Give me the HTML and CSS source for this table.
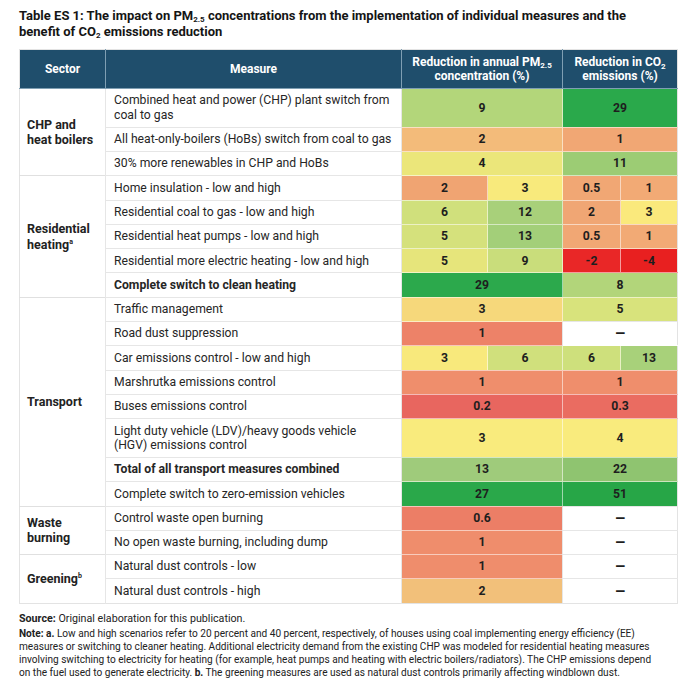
FILE: index.html
```html
<!DOCTYPE html>
<html>
<head>
<meta charset="utf-8">
<link rel="stylesheet" href="styles.css">
</head>
<body>
<div class="page">
  <h1 class="title">Table ES 1: The impact on PM<sub class="sub25">2.5</sub> concentrations from the implementation of individual measures and the benefit of CO<sub class="sub2">2</sub> emissions reduction</h1>
  <table class="tbl">
    <colgroup>
      <col class="c-sector"><col class="c-measure"><col class="c-pm1"><col class="c-pm2"><col class="c-co1"><col class="c-co2">
    </colgroup>
    <thead>
      <tr>
        <th>Sector</th>
        <th>Measure</th>
        <th colspan="2">Reduction in annual PM<sub class="hsub">2.5</sub><br>concentration (%)</th>
        <th colspan="2">Reduction in CO<sub class="hsub2">2</sub><br>emissions (%)</th>
      </tr>
    </thead>
    <tbody>
      <tr class="grp">
        <td class="sector" rowspan="3">CHP and<br>heat boilers</td>
        <td class="measure">Combined heat and power (CHP) plant switch from coal to gas</td>
        <td class="v" colspan="2" style="background:#b3d67a">9</td>
        <td class="v" colspan="2" style="background:#2aa94b">29</td>
      </tr>
      <tr>
        <td class="measure">All heat-only-boilers (HoBs) switch from coal to gas</td>
        <td class="v" colspan="2" style="background:#f3bb7a">2</td>
        <td class="v" colspan="2" style="background:#f1a774">1</td>
      </tr>
      <tr>
        <td class="measure">30% more renewables in CHP and HoBs</td>
        <td class="v" colspan="2" style="background:#ebe67a">4</td>
        <td class="v" colspan="2" style="background:#9ccc74">11</td>
      </tr>
      <tr class="grp">
        <td class="sector" rowspan="5">Residential<br>heating<sup>a</sup></td>
        <td class="measure">Home insulation - low and high</td>
        <td class="v" style="background:#f0a472">2</td>
        <td class="v" style="background:#f8ea7c">3</td>
        <td class="v" style="background:#f1a774">0.5</td>
        <td class="v" style="background:#f2aa75">1</td>
      </tr>
      <tr>
        <td class="measure">Residential coal to gas - low and high</td>
        <td class="v" style="background:#d0e07c">6</td>
        <td class="v" style="background:#a8d07a">12</td>
        <td class="v" style="background:#f0a674">2</td>
        <td class="v" style="background:#fae97c">3</td>
      </tr>
      <tr>
        <td class="measure">Residential heat pumps - low and high</td>
        <td class="v" style="background:#d5e17c">5</td>
        <td class="v" style="background:#a3cf79">13</td>
        <td class="v" style="background:#f1a774">0.5</td>
        <td class="v" style="background:#f2aa75">1</td>
      </tr>
      <tr>
        <td class="measure">Residential more electric heating - low and high</td>
        <td class="v" style="background:#e6e57b">5</td>
        <td class="v" style="background:#c9dd7b">9</td>
        <td class="v" style="background:#e92727">-2</td>
        <td class="v" style="background:#e82020">-4</td>
      </tr>
      <tr>
        <td class="measure bold">Complete switch to clean heating</td>
        <td class="v" colspan="2" style="background:#2ca94c">29</td>
        <td class="v" colspan="2" style="background:#b2d57a">8</td>
      </tr>
      <tr class="grp">
        <td class="sector" rowspan="8">Transport</td>
        <td class="measure">Traffic management</td>
        <td class="v" colspan="2" style="background:#f6d87b">3</td>
        <td class="v" colspan="2" style="background:#d8e37c">5</td>
      </tr>
      <tr>
        <td class="measure">Road dust suppression</td>
        <td class="v" colspan="2" style="background:#ed8268">1</td>
        <td class="v dash" colspan="2">–</td>
      </tr>
      <tr>
        <td class="measure">Car emissions control - low and high</td>
        <td class="v" style="background:#f8e97c">3</td>
        <td class="v" style="background:#d0e07c">6</td>
        <td class="v" style="background:#cee07c">6</td>
        <td class="v" style="background:#a8d17a">13</td>
      </tr>
      <tr>
        <td class="measure">Marshrutka emissions control</td>
        <td class="v" colspan="2" style="background:#ef8e6c">1</td>
        <td class="v" colspan="2" style="background:#ef8e6c">1</td>
      </tr>
      <tr>
        <td class="measure">Buses emissions control</td>
        <td class="v" colspan="2" style="background:#e8665f">0.2</td>
        <td class="v" colspan="2" style="background:#ea6c61">0.3</td>
      </tr>
      <tr>
        <td class="measure">Light duty vehicle (LDV)/heavy goods vehicle<br>(HGV) emissions control</td>
        <td class="v" colspan="2" style="background:#f9eb7d">3</td>
        <td class="v" colspan="2" style="background:#f9eb7d">4</td>
      </tr>
      <tr>
        <td class="measure bold">Total of all transport measures combined</td>
        <td class="v" colspan="2" style="background:#9fcb7b">13</td>
        <td class="v" colspan="2" style="background:#8fc470">22</td>
      </tr>
      <tr>
        <td class="measure">Complete switch to zero-emission vehicles</td>
        <td class="v" colspan="2" style="background:#2aa84a">27</td>
        <td class="v" colspan="2" style="background:#27a647">51</td>
      </tr>
      <tr class="grp">
        <td class="sector" rowspan="2">Waste<br>burning</td>
        <td class="measure">Control waste open burning</td>
        <td class="v" colspan="2" style="background:#ec7e66">0.6</td>
        <td class="v dash" colspan="2">–</td>
      </tr>
      <tr>
        <td class="measure">No open waste burning, including dump</td>
        <td class="v" colspan="2" style="background:#ef8d6c">1</td>
        <td class="v dash" colspan="2">–</td>
      </tr>
      <tr class="grp">
        <td class="sector" rowspan="2">Greening<sup>b</sup></td>
        <td class="measure">Natural dust controls - low</td>
        <td class="v" colspan="2" style="background:#ef8d6c">1</td>
        <td class="v dash" colspan="2">–</td>
      </tr>
      <tr>
        <td class="measure">Natural dust controls - high</td>
        <td class="v" colspan="2" style="background:#f2c07a">2</td>
        <td class="v dash" colspan="2">–</td>
      </tr>
    </tbody>
  </table>
  <p class="source"><b>Source:</b> Original elaboration for this publication.</p>
  <p class="note"><b>Note: a.</b> Low and high scenarios refer to 20 percent and 40 percent, respectively, of houses using coal implementing energy efficiency (EE)<br>measures or switching to cleaner heating. Additional electricity demand from the existing CHP was modeled for residential heating measures<br>involving switching to electricity for heating (for example, heat pumps and heating with electric boilers/radiators). The CHP emissions depend<br>on the fuel used to generate electricity. <b>b.</b> The greening measures are used as natural dust controls primarily affecting windblown dust.</p>
</div>
</body>
</html>
```

FILE: styles.css
```css
html, body {
  margin: 0;
  padding: 0;
  background: #ffffff;
}
.page {
  padding: 8px 19px 0 19px;
  font-family: Roboto, "Liberation Sans", sans-serif;
  color: #222222;
}
.title {
  margin: 0 0 9px 0;
  font-size: 13px;
  line-height: 16px;
  font-weight: 700;
  color: #151515;
  width: 640px;
}
.title sub {
  font-size: 8px;
  line-height: 0;
  vertical-align: -2px;
}
.tbl {
  width: 658px;
  border-collapse: collapse;
  table-layout: fixed;
  font-size: 12.2px;
  border: 1px solid #e3e3e3;
}
.c-sector { width: 86px; }
.c-measure { width: 296px; }
.c-pm1 { width: 86px; }
.c-pm2 { width: 75px; }
.c-co1 { width: 58px; }
.c-co2 { width: 57px; }

.tbl thead th {
  background: #1f4e6c;
  color: #ffffff;
  font-weight: 700;
  font-size: 12px;
  line-height: 14.5px;
  padding: 4px 4px;
  height: 30px;
  text-align: center;
  border-left: 1px solid #7f9fb3;
  border-bottom: 1px solid #7f9fb3;
}
.tbl thead th:first-child { border-left: none; }
.hsub, .hsub2 {
  font-size: 8px;
  line-height: 0;
  vertical-align: -2px;
}
.hsub2 { vertical-align: -3px; }

.tbl td {
  line-height: 14.5px;
  padding: 4.4px 4px 4.4px 8px;
  border-top: 1px solid #e6e6e6;
  border-left: 1px solid #e6e6e6;
  vertical-align: middle;
}
.tbl td.sector {
  font-weight: 700;
  padding-left: 7px;
  padding-right: 4px;
  border-left: none;
  border-top: 1px solid #e0e0e0;
  font-size: 12.5px;
  line-height: 15.5px;
}
.sector sup {
  font-size: 7px;
  line-height: 0;
  vertical-align: 5px;
}
.tbl td.measure {
  color: #262626;
}
.tbl td.measure.bold {
  font-weight: 700;
}
.tbl td.v {
  text-align: center;
  font-weight: 700;
  color: #1e1e1e;
  padding-left: 2px;
  padding-right: 2px;
  border-left: 1px solid rgba(255,255,255,0.55);
  border-top: 1px solid rgba(255,255,255,0.55);
}
.tbl td.measure + td.v {
  border-left: 1px solid #e6e6e6;
}
.tbl td.v.dash {
  background: #ffffff;
  border-top: 1px solid #e6e6e6;
  border-left: 1px solid #e6e6e6;
  font-size: 17px;
}

.source {
  margin: 8px 0 0 0;
  font-size: 10.7px;
  line-height: 13px;
  color: #222222;
}
.note {
  margin: 2px 0 0 0;
  font-size: 10.1px;
  line-height: 13px;
  color: #222222;
  white-space: nowrap;
}
```
